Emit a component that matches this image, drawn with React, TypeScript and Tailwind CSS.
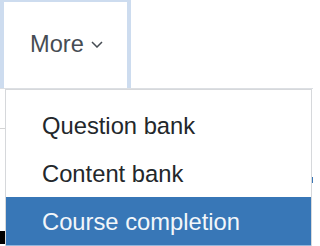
import React from 'react';

const items = ['Question bank', 'Content bank', 'Course completion'];

const App = () => {
  return (
    <div
      className="relative w-[313px] h-[246px] overflow-hidden bg-white"
      style={{ fontFamily: '"Liberation Sans", Arial, sans-serif' }}
    >
      {/* Nav tabs */}
      <div className="flex h-[89px] border-b border-[#dcdfe3]">
        <div className="w-[131px] h-[88px] border-l-4 border-t-2 border-r-4 border-[#cddcef] bg-white pl-[26px] pt-[31px]">
          <div className="flex items-center gap-[7px] text-[23.6px] leading-none text-[#464c53]">
            <span>More</span>
            <svg width="12" height="7" viewBox="0 0 12 7">
              <polyline points="1,1 6,6 11,1" fill="none" stroke="#464c53" strokeWidth="1.5" />
            </svg>
          </div>
        </div>
      </div>

      {/* Page bits peeking out behind the menu */}
      <div className="absolute left-0 top-[128px] w-[5px] h-px bg-[#d4d4d4]" />
      <div className="absolute left-0 top-[231px] w-[5px] h-[13px] bg-black" />
      <div className="absolute right-0 top-[177px] w-px h-[6px] bg-[#3a76b4]" />

      {/* Dropdown menu */}
      <div className="absolute left-[5px] top-[89px] w-[307px] border-l border-t border-r border-[#d6d8db] bg-white pt-[11px]">
        {items.map((label, i) => (
          <div
            key={label}
            className={
              i === 2
                ? 'h-[48px] pl-[36px] leading-[49px] text-[23.75px] bg-[#3877b7] text-[#f2f6fa] whitespace-nowrap'
                : 'h-[48px] pl-[36px] leading-[49px] text-[23.75px] text-[#23272b] whitespace-nowrap'
            }
          >
            {label}
          </div>
        ))}
        <div className="h-px bg-[#93b6dc]" />
      </div>
    </div>
  );
};

export default App;
